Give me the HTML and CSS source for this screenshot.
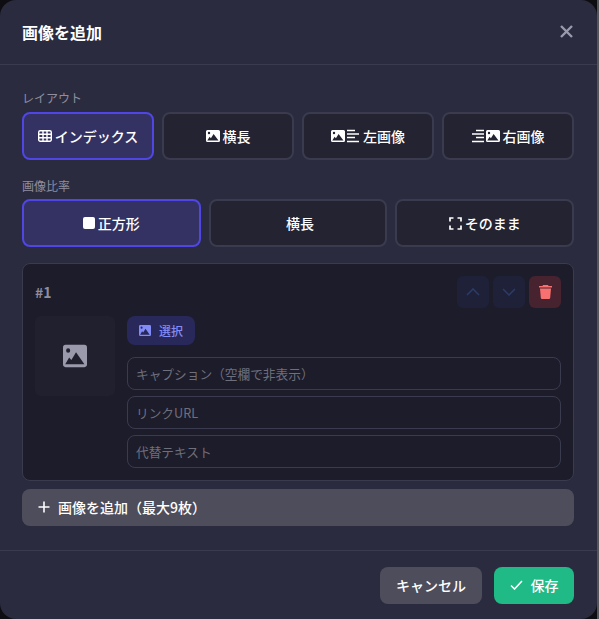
FILE: index.html
```html
<!DOCTYPE html>
<html lang="ja">
    <head>
        <meta charset="utf-8">
        <title>画像を追加</title>
        <link rel="stylesheet" href="styles.css">
    </head>
    <body>
        <div class="modal">
            <header class="modal-header">
                <h2 class="modal-title">画像を追加</h2>
                <button class="close-btn">
                    <svg width="13" height="13" viewBox="0 0 13 13"><path d="M1 1l11 11M12 1L1 12" stroke="currentColor" stroke-width="2.4" fill="none"/></svg>
                </button>
            </header>

            <div class="modal-body">
                <div class="field-label label-layout">レイアウト</div>
                <div class="option-row four">
                    <button class="option active">
                        <svg class="icon" width="14" height="14" viewBox="0 0 14 14"><path d="M.7 3.200A1.500 1.500 0 0 1 2.200 1.700h9.600a1.500 1.500 0 0 1 1.500 1.500v7.600a1.500 1.500 0 0 1-1.500 1.500H2.200a1.500 1.500 0 0 1-1.500-1.500zM.7 5.300h12.600M.7 8.700h12.600M5 1.700v10.600M9 1.700v10.600" stroke="currentColor" stroke-width="1.400" fill="none"/></svg>
                        インデックス
                    </button>
                    <button class="option">
                        <svg class="icon" width="14" height="14" viewBox="0 0 14 14"><use href="#picture"/></svg>
                        横長
                    </button>
                    <button class="option">
                        <svg class="icon" width="14" height="14" viewBox="0 0 14 14"><use href="#picture"/></svg>
                        <svg class="icon lines-after" width="12" height="14" viewBox="0 0 12 14"><path d="M0 1.500h8M0 5h12M0 8.500h8M0 12.500h12" stroke="currentColor" stroke-width="1.300"/></svg>
                        左画像
                    </button>
                    <button class="option">
                        <svg class="icon lines-before" width="12" height="14" viewBox="0 0 12 14"><path d="M4 1.500h8M0 5h12M4 8.500h8M0 12.500h12" stroke="currentColor" stroke-width="1.300"/></svg>
                        <svg class="icon" width="14" height="14" viewBox="0 0 14 14"><use href="#picture"/></svg>
                        右画像
                    </button>
                </div>

                <div class="field-label label-ratio">画像比率</div>
                <div class="option-row three">
                    <button class="option active">
                        <span class="square-icon"></span>
                        正方形
                    </button>
                    <button class="option no-icon">横長</button>
                    <button class="option">
                        <svg class="icon" width="13" height="13" viewBox="0 0 13 13"><path d="M1 4.500V1h3.500M8.500 1H12v3.500M12 8.500V12H8.500M4.500 12H1V8.500" stroke="currentColor" stroke-width="1.700" fill="none"/></svg>
                        そのまま
                    </button>
                </div>

                <div class="image-card">
                    <div class="card-top">
                        <span class="card-num">#1</span>
                        <div class="card-actions">
                            <button class="icon-btn move">
                                <svg width="14" height="8" viewBox="0 0 14 8"><path d="M1 7l6-6 6 6" stroke="currentColor" stroke-width="1.600" fill="none"/></svg>
                            </button>
                            <button class="icon-btn move">
                                <svg width="14" height="8" viewBox="0 0 14 8"><path d="M1 1l6 6 6-6" stroke="currentColor" stroke-width="1.600" fill="none"/></svg>
                            </button>
                            <button class="icon-btn remove">
                                <svg width="13" height="14" viewBox="0 0 13 14"><path d="M4 0h5l.500 1H13v1.500H0V1h3.500zM1 3.500h11l-.800 9.300A1.300 1.300 0 0 1 9.900 14H3.100a1.300 1.300 0 0 1-1.300-1.200z" fill="currentColor"/></svg>
                            </button>
                        </div>
                    </div>
                    <div class="card-main">
                        <div class="thumb">
                            <svg width="24" height="26" viewBox="0 0 14 14" preserveAspectRatio="none"><use href="#picture"/></svg>
                        </div>
                        <div class="card-fields">
                            <button class="select-btn">
                                <svg width="12" height="13" viewBox="0 0 14 14" preserveAspectRatio="none"><use href="#picture"/></svg>
                                選択
                            </button>
                            <input class="text-input first" placeholder="キャプション（空欄で非表示）">
                            <input class="text-input" placeholder="リンクURL">
                            <input class="text-input" placeholder="代替テキスト">
                        </div>
                    </div>
                </div>

                <button class="add-btn">
                    <svg width="12" height="12" viewBox="0 0 12 12"><path d="M6 .500v11M.500 6h11" stroke="currentColor" stroke-width="1.600"/></svg>
                    画像を追加（最大9枚）
                </button>
            </div>

            <footer class="modal-footer">
                <button class="footer-btn cancel">キャンセル</button>
                <button class="footer-btn save">
                    <svg width="13" height="10" viewBox="0 0 13 10"><path d="M1 5.500l3.500 3.500L12 1" stroke="currentColor" stroke-width="1.600" fill="none"/></svg>
                    保存
                </button>
            </footer>
        </div>

        <svg width="0" height="0" class="defs">
            <symbol id="picture" viewBox="0 0 14 14">
                <path d="M1.500 1h11A1.500 1.500 0 0 1 14 2.500v9a1.500 1.500 0 0 1-1.500 1.500h-11A1.500 1.500 0 0 1 0 11.500v-9A1.500 1.500 0 0 1 1.500 1zM3 2.800a1.200 1.200 0 1 0 0 2.400 1.200 1.200 0 0 0 0-2.400zM7.600 5L4.900 9.200 3.600 7.800 1.300 11.500h11.200z" fill="currentColor" fill-rule="evenodd"/>
            </symbol>
        </svg>
    </body>
</html>
```

FILE: styles.css
```css
* {
    box-sizing: border-box;
}

html,
body {
    height: 100%;
}

body {
    margin: 0;
    background: linear-gradient(to right, #0e0e12 597px, #55555a 597px);
    font-family: "Noto Sans CJK JP", "Inter", sans-serif;
    color: #fff;
    overflow: hidden;
}

button {
    font-family: inherit;
    cursor: pointer;
}

.defs {
    position: absolute;
}

.modal {
    width: 597px;
    height: 619px;
    background-color: #2a2b3e;
    border-radius: 16px;
    display: flex;
    flex-direction: column;
}

.modal-header {
    height: 65px;
    flex: none;
    display: flex;
    align-items: center;
    justify-content: space-between;
    padding: 0 24px 1px 22px;
    border-bottom: 1px solid #3a3b4e;
}

.modal-title {
    margin: 0;
    font-size: 16px;
    font-weight: 700;
    line-height: 24px;
}

.close-btn {
    padding: 0;
    display: flex;
    border: none;
    background: none;
    color: #9a9aac;
}

.modal-body {
    flex: 1;
    padding: 0 23px 0 22px;
}

.field-label {
    color: #8e8ea0;
    font-size: 12px;
    line-height: 18px;
}

.label-layout {
    margin-top: 24px;
    margin-bottom: 5px;
}

.label-ratio {
    margin-top: 17px;
    margin-bottom: 4px;
}

.option-row {
    display: grid;
    gap: 8px;
}

.option-row.four {
    grid-template-columns: repeat(4, 1fr);
}

.option-row.three {
    grid-template-columns: repeat(3, 1fr);
}

.option {
    height: 48px;
    padding: 0;
    display: flex;
    align-items: center;
    justify-content: center;
    gap: 3px;
    background-color: #232331;
    border: 2px solid #3a3b4e;
    border-radius: 8px;
    color: #fff;
    font-size: 14px;
    font-weight: 500;
}

.option.no-icon {
    padding-left: 4px;
}

.option.active {
    background-color: #343263;
    border-color: #4f46e5;
}

.lines-after {
    margin: 0 1px 0 -1px;
}

.lines-before {
    margin-right: -1px;
}

.square-icon {
    width: 12px;
    height: 12px;
    border-radius: 2px;
    background-color: #fff;
}

.image-card {
    margin-top: 16px;
    height: 218px;
    padding: 12px;
    background-color: #1c1c2b;
    border: 1px solid #3a3b4e;
    border-radius: 8px;
}

.card-top {
    display: flex;
    align-items: center;
    justify-content: space-between;
    margin-bottom: 8px;
}

.card-num {
    color: #8e8ea0;
    font-size: 14px;
    font-weight: 700;
}

.card-actions {
    display: flex;
    gap: 4px;
}

.icon-btn {
    width: 32px;
    height: 32px;
    padding: 0;
    display: flex;
    align-items: center;
    justify-content: center;
    border: none;
    border-radius: 6px;
}

.icon-btn.move {
    background-color: #1e2138;
    color: #2c3a66;
}

.icon-btn.remove {
    background-color: #47222f;
    color: #f87171;
}

.card-main {
    display: flex;
    gap: 12px;
}

.thumb {
    width: 80px;
    height: 80px;
    flex: none;
    display: flex;
    align-items: center;
    justify-content: center;
    background-color: #20202e;
    border-radius: 6px;
    color: #9a9aac;
}

.card-fields {
    flex: 1;
    display: flex;
    flex-direction: column;
    align-items: flex-start;
    gap: 6px;
}

.select-btn {
    height: 29px;
    padding: 0 12px;
    display: flex;
    align-items: center;
    gap: 8px;
    background-color: #29285a;
    border: none;
    border-radius: 8px;
    color: #818cf8;
    font-size: 12px;
    font-weight: 500;
}

.text-input {
    width: 100%;
    height: 33px;
    padding: 0 8px;
    background: transparent;
    border: 1px solid #3a3b4e;
    border-radius: 8px;
    color: #fff;
    font-family: inherit;
    font-size: 12.7px;
    outline: none;
}

.text-input.first {
    margin-top: 6px;
}

.text-input::placeholder {
    color: #6f6f7c;
}

.add-btn {
    width: 100%;
    height: 37px;
    margin-top: 8px;
    padding: 0 16px 2px;
    display: flex;
    align-items: center;
    gap: 8px;
    background-color: #4d4d5c;
    border: none;
    border-radius: 8px;
    color: #fff;
    font-size: 14px;
    font-weight: 500;
}

.modal-footer {
    height: 69px;
    flex: none;
    display: flex;
    justify-content: flex-end;
    gap: 12px;
    padding: 16px 23px 0 0;
    border-top: 1px solid #3a3b4e;
}

.footer-btn {
    height: 37px;
    padding: 0 0 2px;
    display: flex;
    align-items: center;
    justify-content: center;
    gap: 8px;
    border: none;
    border-radius: 8px;
    color: #fff;
    font-size: 14px;
    font-weight: 500;
}

.footer-btn.cancel {
    width: 102px;
    background-color: #4d4d5c;
}

.footer-btn.save {
    width: 80px;
    background-color: #1fba85;
}
```
